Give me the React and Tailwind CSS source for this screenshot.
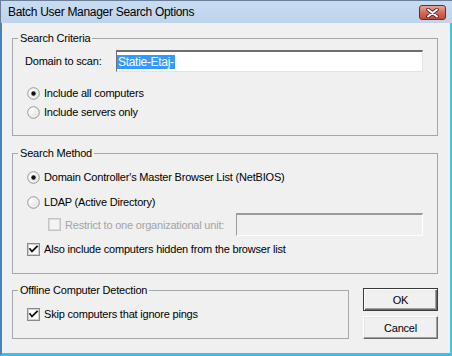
import React from "react";

function Radio({ checked }) {
  return (
    <svg width="13" height="13" viewBox="0 0 13 13" className="shrink-0">
      <defs>
        <radialGradient id="rg" cx="0.35" cy="0.35" r="0.8">
          <stop offset="0" stopColor="#ffffff" />
          <stop offset="1" stopColor="#d4d4d4" />
        </radialGradient>
      </defs>
      <circle cx="6.5" cy="6.5" r="5.8" fill="url(#rg)" stroke="#9a9a9a" strokeWidth="1" />
      <circle cx="6.5" cy="6.5" r="4.3" fill="none" stroke="#ffffff" strokeWidth="0.8" />
      {checked && <circle cx="6.5" cy="6.5" r="2.2" fill="#111" />}
    </svg>
  );
}

function Check({ checked, disabled }) {
  return (
    <svg width="13" height="13" viewBox="0 0 13 13" className="shrink-0">
      <rect x="0.5" y="0.5" width="12" height="12" fill={disabled ? "#f4f4f4" : "#f2f2f2"} stroke={disabled ? "#c4c4c4" : "#8a8a8a"} />
      <rect x="1.5" y="1.5" width="10" height="10" fill={disabled ? "#f4f4f4" : "#ffffff"} stroke={disabled ? "#dadada" : "#d0d0d0"} />
      {checked && (
        <polyline points="3,6 5,8.5 10,3.5" fill="none" stroke="#111" strokeWidth="1.8" strokeLinecap="square" />
      )}
    </svg>
  );
}

function Group({ title, className, children }) {
  return (
    <fieldset className={"border border-[#a7a7a7] box-border " + className}>
      <legend className="ml-[5px] px-[2px] text-[11px] leading-[14px] text-black">{title}</legend>
      {children}
    </fieldset>
  );
}

export default function App() {
  return (
    <div className="w-[452px] h-[356px] flex flex-col bg-[#f0f0f0] font-['Liberation_Sans',Arial,sans-serif] text-black overflow-hidden">
      <div className="h-[23px] shrink-0 flex items-center justify-between pl-[7px] pr-[6px] bg-gradient-to-b from-[#c8dcf1] to-[#bed4ec] border-t border-l border-[#6a7f97]">
        <span className="text-[12px] leading-[14px] text-black font-['Liberation_Sans',Arial,sans-serif] tracking-[-0.3px]">Batch User Manager Search Options</span>
        <div className="w-[27px] h-[15px] rounded-[3px] border border-[#6b2b2b] bg-gradient-to-b from-[#e8a898] via-[#d46a57] to-[#c4483a] flex items-center justify-center mt-[1px]">
          <svg width="13" height="10" viewBox="0 0 13 10">
            <path d="M2 1.5 L11 8.5 M11 1.5 L2 8.5" stroke="#5a2020" strokeWidth="3.6" strokeLinecap="round" />
            <path d="M2 1.5 L11 8.5 M11 1.5 L2 8.5" stroke="#ffffff" strokeWidth="2" strokeLinecap="round" />
          </svg>
        </div>
      </div>
      <div className="flex-1 flex flex-col border-l-2 border-l-[#4a80c0] border-r-2 border-r-[#3cc6ee] border-b-[3px] border-b-[#33c3ee] pl-[10px] pt-[8px] text-[11px] leading-[14px] tracking-[-0.2px]">
        <Group title="Search Criteria" className="w-[426px] h-[105px]">
          <div className="flex items-center mt-[5px] h-[22px] pl-[12px]">
            <span className="w-[91px]">Domain to scan:</span>
            <div className="w-[307px] h-[22px] bg-white border-t-2 border-l border-t-[#6e6e6e] border-l-[#6e6e6e] border-r border-b border-r-[#e3e3e3] border-b-[#e3e3e3] flex items-center">
              <span className="bg-[#3399ff] text-white leading-[14px] px-[1px] text-[12px] tracking-[-0.3px]">Statie-Etaj-</span>
            </div>
          </div>
          <div className="flex items-center gap-[4px] h-[16px] mt-[13px] pl-[14px]">
            <Radio checked />
            <span>Include all computers</span>
          </div>
          <div className="flex items-center gap-[4px] h-[16px] mt-[3px] pl-[14px]">
            <Radio />
            <span>Include servers only</span>
          </div>
        </Group>
        <Group title="Search Method" className="w-[426px] h-[128px] mt-[10px]">
          <div className="flex items-center gap-[4px] h-[16px] mt-[9px] pl-[14px]">
            <Radio checked />
            <span>Domain Controller's Master Browser List (NetBIOS)</span>
          </div>
          <div className="flex items-center gap-[4px] h-[16px] mt-[9px] pl-[14px]">
            <Radio />
            <span>LDAP (Active Directory)</span>
          </div>
          <div className="flex items-center h-[23px] mt-[3px] pl-[35px]">
            <Check disabled />
            <span className="ml-[4px] text-[#a3a3a3] w-[171px]">Restrict to one organizational unit:</span>
            <div className="w-[187px] h-[23px] bg-[#f0f0f0] border-t-2 border-l border-t-[#9a9a9a] border-l-[#9a9a9a] border-r border-b border-r-[#ffffff] border-b-[#ffffff]" />
          </div>
          <div className="flex items-center gap-[4px] h-[16px] mt-[5px] pl-[14px]">
            <Check checked />
            <span>Also include computers hidden from the browser list</span>
          </div>
        </Group>
        <div className="flex mt-[9px]">
          <Group title="Offline Computer Detection" className="w-[337px] h-[56px]">
            <div className="flex items-center gap-[4px] h-[16px] mt-[9px] pl-[14px]">
              <Check checked />
              <span>Skip computers that ignore pings</span>
            </div>
          </Group>
          <div className="flex flex-col gap-[5px] ml-[14px] mt-[5px]">
            <div className="w-[75px] h-[23px] border border-[#3c3c3c] bg-[#f0f0f0] shadow-[inset_1px_1px_0_#ffffff,inset_-1px_-1px_0_#696969,inset_-2px_-2px_0_#a0a0a0] flex items-center justify-center">
              OK
            </div>
            <div className="w-[75px] h-[23px] bg-[#f0f0f0] border border-t-[#ffffff] border-l-[#ffffff] border-r-[#696969] border-b-[#696969] shadow-[inset_-1px_-1px_0_#a0a0a0,inset_1px_1px_0_#e3e3e3] flex items-center justify-center">
              Cancel
            </div>
          </div>
        </div>
      </div>
    </div>
  );
}
